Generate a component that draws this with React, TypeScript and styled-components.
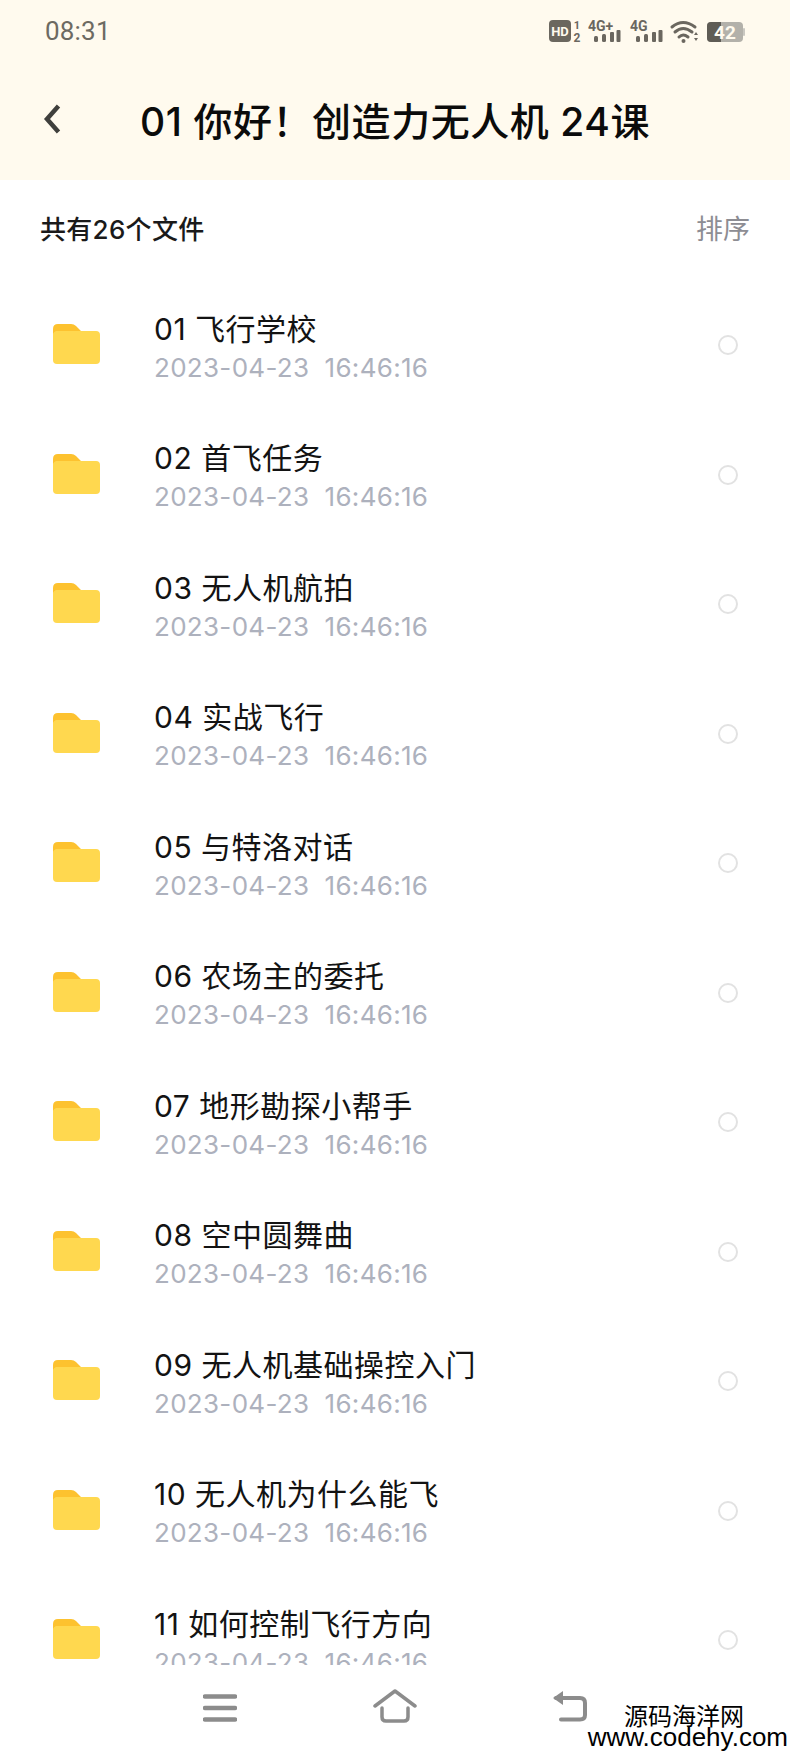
import React from "react";
import styled, { createGlobalStyle } from "styled-components";

const cjk = `Inter, "Noto Sans CJK SC", sans-serif`;

const GlobalStyle = createGlobalStyle`
  html, body {
    margin: 0;
    padding: 0;
    background: #ffffff;
  }
  * {
    box-sizing: border-box;
  }
`;

const Page = styled.div`
  position: relative;
  width: 790px;
  height: 1756px;
  display: flex;
  flex-direction: column;
  overflow: hidden;
  background: #ffffff;
  font-family: ${cjk};
`;

const Header = styled.header`
  height: 180px;
  flex-shrink: 0;
  background: #fffaee;
`;

const StatusBar = styled.div`
  height: 62px;
  padding: 0 45px;
  display: flex;
  align-items: center;
  justify-content: space-between;
`;

const Clock = styled.span`
  font-family: Roboto, sans-serif;
  font-size: 26px;
  letter-spacing: 0.2px;
  color: #6d6a62;
`;

const StatusIcons = styled.div`
  display: flex;
  align-items: center;
`;

const TopBar = styled.div`
  height: 114px;
  padding-left: 43px;
  display: flex;
  align-items: center;
`;

const BackButton = styled.svg`
  width: 18px;
  height: 30px;
  margin-right: 79px;
`;

const PageTitle = styled.h1`
  margin: 0;
  font-size: 39px;
  font-weight: 500;
  letter-spacing: 0.55px;
  white-space: pre;
  color: #0b0b0b;
`;

const Summary = styled.div`
  height: 94px;
  padding: 0 40px;
  display: flex;
  align-items: center;
  justify-content: space-between;
`;

const FileCount = styled.span`
  font-size: 26px;
  font-weight: 500;
  letter-spacing: 0.3px;
  color: #1a1a1a;
`;

const SortLabel = styled.span`
  font-size: 27px;
  color: #8d8d93;
`;

const FileList = styled.ul`
  flex: 1;
  min-height: 0;
  margin: 0;
  padding: 9px 0 0;
  list-style: none;
  overflow: hidden;
`;

const FileRow = styled.li`
  height: 129.5px;
  padding: 0 52px 0 53px;
  display: flex;
  align-items: center;
`;

const FolderIcon = styled.svg`
  width: 47px;
  height: 41px;
  flex-shrink: 0;
  margin: 0 54px 6px 0;
`;

const FileText = styled.div`
  flex: 1;
  min-width: 0;
`;

const FileName = styled.div`
  font-size: 30px;
  line-height: 40px;
  letter-spacing: 0.5px;
  color: #131313;
  white-space: pre;
`;

const FileDate = styled.div`
  font-size: 26px;
  line-height: 38px;
  letter-spacing: 0.3px;
  color: #adb1bd;
  white-space: pre;
`;

const Radio = styled.span`
  width: 20px;
  height: 20px;
  margin-bottom: 5px;
  flex-shrink: 0;
  border: 2px solid #e2e2e2;
  border-radius: 50%;
`;

const NavBar = styled.nav`
  height: 91px;
  flex-shrink: 0;
  padding: 29px 202px 0 203px;
  display: flex;
  align-items: flex-start;
  justify-content: space-between;
`;

const Watermark = styled.div`
  position: absolute;
  right: 0;
  bottom: 7px;
  width: 200px;
  display: flex;
  flex-direction: column;
  align-items: flex-end;
  color: #000000;
`;

const WatermarkName = styled.span`
  margin-right: 46px;
  font-size: 24px;
  line-height: 22px;
  font-family: "Noto Sans CJK SC", sans-serif;
`;

const WatermarkUrl = styled.span`
  margin-right: 2px;
  font-size: 26px;
  line-height: 23px;
  font-family: "Liberation Sans", sans-serif;
`;

const files = [
  "01 飞行学校",
  "02 首飞任务",
  "03 无人机航拍",
  "04 实战飞行",
  "05 与特洛对话",
  "06 农场主的委托",
  "07 地形勘探小帮手",
  "08 空中圆舞曲",
  "09 无人机基础操控入门",
  "10 无人机为什么能飞",
  "11 如何控制飞行方向",
];

const StatusGlyphs = () => (
  <svg width="198" height="30" viewBox="0 0 198 30">
    <g fill="#6b675f" fontFamily="Roboto, sans-serif" fontWeight="700">
      <rect x="2" y="4" width="22" height="22" rx="4" />
      <text x="13" y="20" fontSize="13" fill="#fffaee" textAnchor="middle">HD</text>
      <text x="30" y="13" fontSize="11" textAnchor="middle">1</text>
      <text x="30" y="26" fontSize="12" textAnchor="middle">2</text>

      <text x="41" y="15" fontSize="14">4G+</text>
      <rect x="47" y="20" width="4" height="6" rx="1.500" />
      <rect x="55" y="18" width="4" height="8" rx="1.500" />
      <rect x="63" y="16" width="4" height="10" rx="1" />
      <rect x="69.500" y="14" width="4" height="12" rx="1" />

      <text x="83" y="15" fontSize="14">4G</text>
      <rect x="89" y="20" width="4" height="6" rx="1.500" />
      <rect x="97" y="18" width="4" height="8" rx="1.500" />
      <rect x="105" y="16" width="4" height="10" rx="1" />
      <rect x="111.500" y="14" width="4" height="12" rx="1" />
    </g>
    <g fill="none" stroke="#6b675f" strokeWidth="3" strokeLinecap="round">
      <path d="M125 11 Q136 2 148 11" />
      <path d="M128 16 Q136 9 145 16" />
      <path d="M132 21 Q136 17 141 21" />
    </g>
    <circle cx="136.500" cy="25" r="2" fill="#6b675f" />
    <path d="M147 19 l2 -3 l2 3 z M147 22 l2 3 l2 -3 z" fill="#6b675f" />
    <rect x="160" y="6" width="36" height="20" rx="4" fill="#b3b1aa" />
    <path d="M164 6 H174 V26 H164 a4 4 0 0 1 -4 -4 V10 a4 4 0 0 1 4 -4 z" fill="#5f5c55" />
    <rect x="196" y="12" width="2" height="8" rx="1" fill="#c9c7c0" />
    <text x="178" y="23" fontSize="19" fontWeight="700" fontFamily="Roboto, sans-serif" fill="#fffaee" textAnchor="middle">42</text>
  </svg>
);

const Folder = () => (
  <FolderIcon viewBox="0 0 47 41">
    <path d="M5 0 H18 Q21 0 23 2 L28 7 H5 Q2 7 0 10 V5 Q0 0 5 0 Z" fill="#fdc22f" />
    <path d="M0 10 Q0 7 4 7 H43 Q47 7 47 11 V36 Q47 40 43 40 H4 Q0 40 0 36 Z" fill="#ffd84f" />
    <path d="M0 7 H26 L28 7 H4 Q1 7 0 10 Z" fill="#fdc22f" />
  </FolderIcon>
);

const App = () => {
  return (
    <Page>
      <GlobalStyle />
      <Header>
        <StatusBar>
          <Clock>08:31</Clock>
          <StatusIcons>
            <StatusGlyphs />
          </StatusIcons>
        </StatusBar>
        <TopBar>
          <BackButton viewBox="0 0 18 30">
            <path d="M15.500 2 L4 15 L15.500 28" fill="none" stroke="#3f3f3c" strokeWidth="4.500" />
          </BackButton>
          <PageTitle>01 你好！创造力无人机 24课</PageTitle>
        </TopBar>
      </Header>
      <Summary>
        <FileCount>共有26个文件</FileCount>
        <SortLabel>排序</SortLabel>
      </Summary>
      <FileList>
        {files.map((name) => (
          <FileRow key={name}>
            <Folder />
            <FileText>
              <FileName>{name}</FileName>
              <FileDate>2023-04-23  16:46:16</FileDate>
            </FileText>
            <Radio />
          </FileRow>
        ))}
      </FileList>
      <NavBar>
        <svg width="34" height="28" viewBox="0 0 34 28">
          <path d="M2 2.500 H32 M2 14 H32 M2 25.500 H32" stroke="#8c8c8c" strokeWidth="4.500" strokeLinecap="round" />
        </svg>
        <svg width="44" height="34" viewBox="0 0 44 34" style={{ marginTop: -5 }}>
          <path d="M2 17 L22 2 L42 17 M9 19 V28 Q9 32 13 32 H31 Q35 32 35 28 V19" fill="none" stroke="#8c8c8c" strokeWidth="3.500" strokeLinecap="round" strokeLinejoin="round" />
        </svg>
        <svg width="36" height="32" viewBox="0 0 36 32" style={{ marginTop: -4 }}>
          <path d="M4 8 H28 Q33 8 33 13 V25 Q33 29.500 28 29.500 H9" fill="none" stroke="#8c8c8c" strokeWidth="4" strokeLinecap="round" />
          <path d="M1 8 L11 1 V15 Z" fill="#8c8c8c" />
        </svg>
      </NavBar>
      <Watermark>
        <WatermarkName>源码海洋网</WatermarkName>
        <WatermarkUrl>www.codehy.com</WatermarkUrl>
      </Watermark>
    </Page>
  );
};

export default App;
